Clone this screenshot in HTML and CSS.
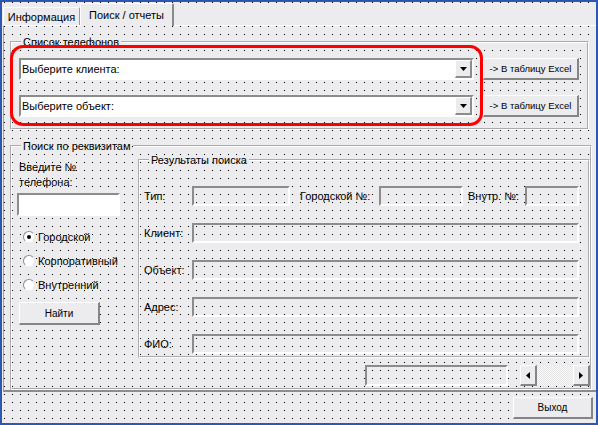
FILE: index.html
```html
<!DOCTYPE html>
<html lang="ru">
<head>
<meta charset="utf-8">
<title>Поиск / отчеты</title>
<link rel="stylesheet" href="styles.css">
</head>
<body>
<div class="window">
  <div class="multipage">
    <div class="tabstrip">
      <div class="tab">Информация</div>
      <div class="tab active">Поиск / отчеты</div>
    </div>
    <div class="page">
      <fieldset class="frame frame-phones">
        <legend>Список телефонов</legend>
        <div class="phone-row">
          <div class="combo"><span class="combo-text">Выберите клиента:</span><span class="drop"><svg width="7" height="4" viewBox="0 0 7 4"><polygon points="0,0 7,0 3.5,4" fill="#000"/></svg></span></div>
          <button class="btn excel">-&gt; В таблицу Excel</button>
        </div>
        <div class="phone-row">
          <div class="combo"><span class="combo-text">Выберите объект:</span><span class="drop"><svg width="7" height="4" viewBox="0 0 7 4"><polygon points="0,0 7,0 3.5,4" fill="#000"/></svg></span></div>
          <button class="btn excel">-&gt; В таблицу Excel</button>
        </div>
      </fieldset>
      <fieldset class="frame frame-search">
        <legend>Поиск по реквизитам</legend>
        <div class="search-body">
          <div class="left-col">
            <div class="phone-label">Введите №<br>телефона:</div>
            <div class="phone-input"></div>
            <div class="radios">
              <div class="radio-row"><span class="radio checked"></span>Городской</div>
              <div class="radio-row"><span class="radio"></span>Корпоративный</div>
              <div class="radio-row"><span class="radio"></span>Внутренний</div>
            </div>
            <button class="btn find">Найти</button>
          </div>
          <div class="right-col">
            <fieldset class="frame frame-results">
              <legend>Результаты поиска</legend>
              <div class="res-row">
                <span class="res-label">Тип:</span>
                <span class="tbox w-type"></span>
                <span class="res-label lbl-city">Городской №:</span>
                <span class="tbox w-city"></span>
                <span class="res-label lbl-int">Внутр. №:</span>
                <span class="tbox w-int"></span>
              </div>
              <div class="res-row"><span class="res-label">Клиент:</span><span class="tbox w-full"></span></div>
              <div class="res-row"><span class="res-label">Объект:</span><span class="tbox w-full"></span></div>
              <div class="res-row"><span class="res-label">Адрес:</span><span class="tbox w-full"></span></div>
              <div class="res-row"><span class="res-label">ФИО:</span><span class="tbox w-full"></span></div>
            </fieldset>
            <div class="nav-row">
              <span class="tbox nav-box"></span>
              <div class="scrollbar">
                <span class="sbtn"><svg width="4" height="7" viewBox="0 0 4 7"><polygon points="4,0 4,7 0,3.5" fill="#000"/></svg></span>
                <span class="track"></span>
                <span class="sbtn"><svg width="4" height="7" viewBox="0 0 4 7"><polygon points="0,0 0,7 4,3.5" fill="#000"/></svg></span>
              </div>
            </div>
          </div>
        </div>
      </fieldset>
    </div>
  </div>
  <div class="footer">
    <button class="btn exit">Выход</button>
  </div>
  <div class="highlight"></div>
</div>
</body>
</html>
```
FILE: styles.css
```css
* { box-sizing: border-box; }
html, body { margin: 0; padding: 0; }
body {
  width: 598px;
  height: 425px;
  overflow: hidden;
  font-family: "Liberation Sans", Arial, sans-serif;
  font-size: 11px;
  color: #000;
  background: #ecebee;
}
.window {
  position: relative;
  width: 598px;
  height: 425px;
  border: 2px solid #2d57b2;
  background-color: #ecebee;
  background-image: conic-gradient(from 270deg at 1px 1px, #000 25%, transparent 0);
  background-size: 8px 8px;
  background-position: 2px 0;
  display: flex;
  flex-direction: column;
}
.multipage {
  margin: 1px 0 0 1px;
  width: 593px;
  height: 389px;
  display: flex;
  flex-direction: column;
  overflow: hidden;
}
.tabstrip {
  height: 22px;
  flex: none;
  background: #ecebee;
  display: flex;
  align-items: flex-end;
  position: relative;
  z-index: 2;
}
.tab {
  height: 18px;
  width: 77px;
  border-top: 1px solid #fff;
  border-left: 1px solid #fff;
  border-right: 1px solid #9a9a9a;
  border-radius: 2px 2px 0 0;
  display: flex;
  align-items: center;
  justify-content: center;
  font-size: 11px;
  background: #ecebee;
}
.tab.active {
  height: 23px;
  width: 94px;
  margin-bottom: -1px;
  border-right: 2px solid #8c8c8c;
  padding-bottom: 1px;
}
.page {
  flex: 1;
  border-top: 1px solid #fff;
  border-left: 1px solid #a0a0a0;
  border-bottom: 2px solid #8c8c8c;
  padding-left: 6px;
  display: flex;
  flex-direction: column;
  overflow: hidden;
}
.frame {
  margin: 0;
  padding: 0;
  min-width: 0;
  border: 2px groove #fff;
}
.frame > legend {
  padding: 0 2px;
  line-height: 14px;
  font-size: 11px;
}
.frame-phones {
  margin-top: 9px;
  width: 579px;
  padding: 9px 0 11px 7px;
  display: flex;
  flex-direction: column;
  gap: 15px;
}
.frame-phones > legend { margin-left: 2px; }
.phone-row {
  display: flex;
  gap: 9px;
  height: 22px;
}
.combo {
  width: 455px;
  height: 22px;
  background: #fff;
  border: 2px solid;
  border-color: #8c8c8c #fff #fff #8c8c8c;
  display: flex;
  align-items: center;
  justify-content: space-between;
  padding-left: 1px;
}
.drop {
  width: 17px;
  height: 18px;
  background: #ecebee;
  border-style: solid;
  border-width: 1px 2px 2px 1px;
  border-color: #fff #8c8c8c #8c8c8c #fff;
  display: flex;
  align-items: center;
  justify-content: center;
}
.btn {
  font-family: "Liberation Sans", Arial, sans-serif;
  font-size: 11px;
  color: #000;
  background: #ecebee;
  border-style: solid;
  border-width: 1px 2px 2px 1px;
  border-color: #fff #858585 #858585 #fff;
  padding: 0;
  margin: 0;
  white-space: nowrap;
  overflow: hidden;
}
.excel {
  width: 96px;
  height: 22px;
  font-size: 9.5px;
}
.frame-search {
  margin-top: 9px;
  width: 582px;
  flex: 1;
}
.frame-search > legend { margin-left: 9px; }
.search-body {
  display: flex;
}
.left-col {
  width: 126px;
  padding-left: 5px;
  display: flex;
  flex-direction: column;
  align-items: flex-start;
}
.phone-label {
  margin: 7px 0 0 2px;
  line-height: 15px;
}
.phone-input {
  margin-top: 3px;
  width: 103px;
  height: 23px;
  background: #fff;
  border: 2px solid;
  border-color: #8c8c8c #fff #fff #8c8c8c;
}
.radios {
  margin-top: 9px;
  padding-left: 6px;
}
.radio-row {
  height: 24px;
  display: flex;
  align-items: center;
}
.radio {
  width: 12px;
  height: 12px;
  border-radius: 50%;
  background: #fff;
  border: 1px solid;
  border-color: #8c8c8c #e6e6e6 #f4f4f4 #8c8c8c;
  margin-right: 3px;
  display: flex;
  align-items: center;
  justify-content: center;
}
.radio.checked::after {
  content: "";
  width: 4px;
  height: 4px;
  border-radius: 50%;
  background: #000;
}
.find {
  margin: 5px 0 0 2px;
  width: 81px;
  height: 23px;
  font-size: 10px;
}
.right-col {
  width: 452px;
  display: flex;
  flex-direction: column;
}
.frame-results {
  width: 452px;
  padding: 19px 0 2px 4px;
  display: flex;
  flex-direction: column;
  gap: 17px;
}
.frame-results > legend { margin-left: 5px; }
.res-row {
  display: flex;
  align-items: center;
  height: 20px;
}
.res-label {
  width: 48px;
  flex: none;
}
.tbox {
  display: block;
  height: 20px;
  border: 2px solid;
  border-color: #8c8c8c #fff #fff #8c8c8c;
  flex: none;
}
.w-type { width: 98px; }
.lbl-city { width: 79px; margin-left: 10px; }
.w-city { width: 84px; }
.lbl-int { width: 57px; margin-left: 5px; }
.w-int { width: 54px; }
.w-full { width: 387px; }
.nav-row {
  margin-top: 7px;
  height: 21px;
  display: flex;
  justify-content: flex-end;
  gap: 12px;
}
.nav-box {
  width: 143px;
  height: 21px;
}
.scrollbar {
  width: 70px;
  height: 21px;
  display: flex;
}
.sbtn {
  width: 17px;
  height: 21px;
  background: #ecebee;
  border-style: solid;
  border-width: 1px 2px 2px 1px;
  border-color: #fff #858585 #858585 #fff;
  display: flex;
  align-items: center;
  justify-content: center;
}
.track {
  flex: 1;
  background: repeating-conic-gradient(#fafafa 0 25%, #e4e4e4 0 50%) 0 0 / 2px 2px;
}
.footer {
  display: flex;
  justify-content: flex-end;
  padding: 5px 3px 0 0;
}
.exit {
  width: 80px;
  height: 22px;
  font-size: 10px;
}
.highlight {
  position: absolute;
  left: 8px;
  top: 43px;
  width: 473px;
  height: 81px;
  border: 3px solid #f00;
  border-radius: 13px;
  pointer-events: none;
}
```
